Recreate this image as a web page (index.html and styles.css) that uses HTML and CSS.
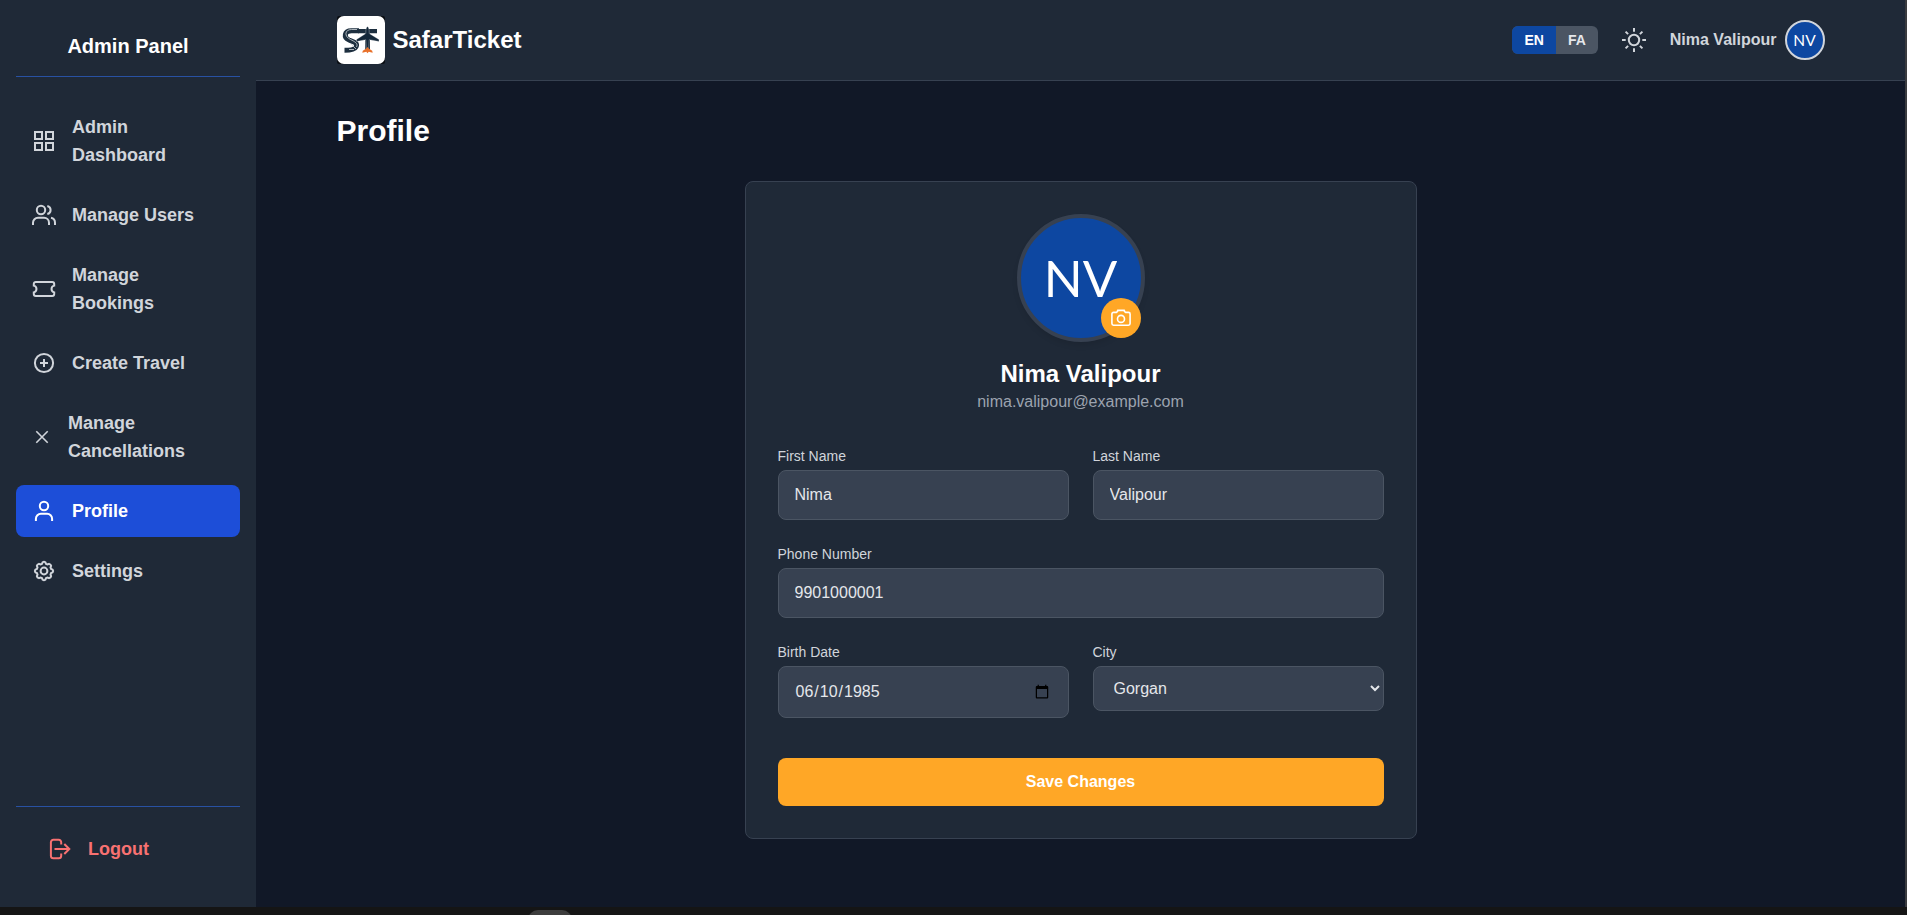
FILE: index.html
```html
<!DOCTYPE html>
<html lang="en">
<head>
<meta charset="utf-8">
<title>SafarTicket - Profile</title>
<link rel="stylesheet" href="styles.css">
</head>
<body>
<div class="app">
  <aside class="sidebar">
    <h2 class="sidebar-title">Admin Panel</h2>
    <nav class="nav">
      <a class="nav-item"><svg class="icon" viewBox="0 0 24 24"><path d="M3 3h7v7H3zM14 3h7v7h-7zM3 14h7v7H3zM14 14h7v7h-7z"/></svg><span>Admin Dashboard</span></a>
      <a class="nav-item"><svg class="icon" viewBox="0 0 24 24"><circle cx="9" cy="7" r="4.200"/><path d="M1 22v-2.200a5 5 0 0 1 5-5h6a5 5 0 0 1 5 5V22M15.300 2.900a4.200 4.200 0 0 1 0 8.200M19 14.800a5 5 0 0 1 4 4.900V22"/></svg><span>Manage Users</span></a>
      <a class="nav-item"><svg class="icon" viewBox="0 0 24 24"><path d="M3.800 4.900h16.400a2 2 0 0 1 2 2v1.700a3.500 3.500 0 0 0 0 6.800v1.700a2 2 0 0 1-2 2H3.800a2 2 0 0 1-2-2v-1.700a3.500 3.500 0 0 0 0-6.800V6.900a2 2 0 0 1 2-2z"/></svg><span>Manage Bookings</span></a>
      <a class="nav-item"><svg class="icon" viewBox="0 0 24 24"><circle cx="12" cy="12" r="9.100"/><path d="M12 8v8M8 12h8"/></svg><span>Create Travel</span></a>
      <a class="nav-item"><svg class="icon icon-small" viewBox="0 0 20 20"><path d="M4.300 4.300l11.400 11.400M15.700 4.300L4.300 15.700"/></svg><span>Manage Cancellations</span></a>
      <a class="nav-item active"><svg class="icon" viewBox="0 0 24 24"><circle cx="12" cy="7" r="4.200"/><path d="M3.900 22v-2.200a5 5 0 0 1 5-5h6.200a5 5 0 0 1 5 5V22"/></svg><span>Profile</span></a>
      <a class="nav-item"><svg class="icon" viewBox="0 0 24 24"><circle cx="12" cy="12" r="3.400"/><path d="M9.900 4.900 10.700 3.300Q12 2.400 13.300 3.300L14.100 4.900 15.500 5.500 17.200 4.900Q18.800 5.200 19.100 6.800L18.500 8.500 19.100 9.900 20.700 10.700Q21.600 12 20.700 13.300L19.100 14.100 18.500 15.500 19.100 17.200Q18.800 18.800 17.200 19.100L15.500 18.500 14.100 19.100 13.300 20.700Q12 21.600 10.700 20.700L9.900 19.100 8.500 18.500 6.800 19.100Q5.200 18.800 4.900 17.200L5.500 15.500 4.900 14.100 3.300 13.300Q2.400 12 3.300 10.700L4.900 9.900 5.500 8.500 4.900 6.800Q5.200 5.200 6.800 4.900L8.500 5.500z"/></svg><span>Settings</span></a>
    </nav>
    <div class="sidebar-footer">
      <a class="nav-item logout"><svg class="icon" viewBox="0 0 24 24"><path d="M13.200 7.500V5.200a2.500 2.500 0 0 0-2.500-2.500H5.400a2.500 2.500 0 0 0-2.500 2.500v13.600a2.500 2.500 0 0 0 2.500 2.500h5.300a2.500 2.500 0 0 0 2.500-2.500v-2.300M6.500 12h14.300M16.300 7l5 5-5 5"/></svg><span>Logout</span></a>
    </div>
  </aside>
  <div class="main">
    <header class="header">
      <div class="brand">
        <span class="logo"><svg viewBox="0 0 48 48">
          <path class="logo-road" d="M22 14.800h-7.500c-7.500 0-8 7-2.500 9.200 5.500 2 9 3 7 7-1.500 3-6 3.300-11.500 3.300"/>
          <path class="logo-lines" d="M20 13.500h-5.500c-7 0-7.500 7-1 10 4 2 8 4 6 7.500M14 28l5 5M12 33.500h5"/>
          <path class="logo-ink" d="M21 13h19v4.300H21zM28.200 17h4.800v18h-4.800z"/>
          <path class="logo-plane" d="M30.500 10.500c1.500 1.200 1.700 3 1.700 7l9.800 6v2l-9.800-1.800-.7 10.500h-2l-.7-10.500-9.300 1.800v-2l9.300-6c0-4 .2-5.800 1.700-7z"/>
          <path class="logo-tail" d="M30.500 31l1.200 1.500 3.500 2.200.5 2-4-1-1.200 1.500-1.200-1.500-4 1 .5-2 3.500-2.200z"/>
        </svg></span>
        <span class="brand-name">SafarTicket</span>
      </div>
      <div class="tools">
        <div class="lang"><span class="lang-option selected">EN</span><span class="lang-option">FA</span></div>
        <svg class="icon sun" viewBox="0 0 24 24"><circle cx="12" cy="12" r="5.200"/><path d="M12 0v3.700M12 20.300V24M0 12h3.700M20.300 12H24M3.600 3.600l2.500 2.500M17.900 17.900l2.500 2.500M3.600 20.400l2.500-2.500M17.900 6.100l2.500-2.500"/></svg>
        <div class="user"><span>Nima Valipour</span><span class="avatar avatar-small">NV</span></div>
      </div>
    </header>
    <main class="content">
      <h1 class="page-title">Profile</h1>
      <section class="card">
        <div class="identity">
          <div class="avatar-wrap">
            <span class="avatar avatar-large">NV</span>
            <button class="camera" type="button" aria-label="Change photo"><svg class="icon-camera" viewBox="0 0 20 20"><path d="M6.600 2.400h6.800v.9l1.200 1.100h2.900a1.600 1.600 0 0 1 1.600 1.600v9.600a1.600 1.600 0 0 1-1.600 1.600h-15A1.600 1.600 0 0 1 .9 15.600V6a1.600 1.600 0 0 1 1.600-1.600h2.900l1.200-1.100z"/><circle cx="10" cy="10.900" r="3.500"/></svg></button>
          </div>
          <h2 class="name">Nima Valipour</h2>
          <p class="email">nima.valipour@example.com</p>
        </div>
        <form class="form">
          <label class="field"><span class="label">First Name</span><input class="control" type="text" value="Nima"></label>
          <label class="field"><span class="label">Last Name</span><input class="control" type="text" value="Valipour"></label>
          <label class="field wide"><span class="label">Phone Number</span><input class="control" type="text" value="9901000001"></label>
          <label class="field"><span class="label">Birth Date</span><input class="control" type="date" value="1985-06-10"></label>
          <label class="field"><span class="label">City</span><select class="control"><option>Gorgan</option></select></label>
          <button class="save wide" type="button">Save Changes</button>
        </form>
      </section>
    </main>
  </div>
</div>
<div class="dock"><span class="dock-tab"></span></div>
</body>
</html>
```
FILE: styles.css
```css
* { box-sizing: border-box; margin: 0; padding: 0; }
body {
  height: 915px;
  overflow: hidden;
  background: #151515;
  color: #fff;
  font: 16px/24px "Liberation Sans", Arial, sans-serif;
}
.app {
  display: flex;
  height: 907px;
  background: #111827;
  border-right: 2px solid #3a3b3f;
}
.sidebar {
  width: 256px;
  flex: none;
  display: flex;
  flex-direction: column;
  padding: 16px;
  background: #1f2937;
}
.sidebar-title {
  margin-bottom: 24px;
  padding: 16px 0;
  border-bottom: 1px solid #2851a3;
  text-align: center;
  font-size: 20px;
  line-height: 28px;
}
.nav { flex: 1; display: flex; flex-direction: column; gap: 8px; }
.nav-item {
  display: flex;
  align-items: center;
  gap: 16px;
  padding: 12px 16px;
  border-radius: 8px;
  color: #d1d5db;
  font-size: 18px;
  font-weight: 600;
  line-height: 28px;
}
.nav-item.active { background: #1d4ed8; color: #fff; }
.icon {
  width: 24px;
  height: 24px;
  flex: none;
  fill: none;
  stroke: currentColor;
  stroke-width: 2;
}
.icon-small { width: 20px; height: 20px; stroke-width: 1.6; }
.sidebar-footer { padding: 16px; border-top: 1px solid #2851a3; }
.nav-item.logout { color: #f87171; }

.main { flex: 1; }
.header {
  display: flex;
  justify-content: space-between;
  align-items: center;
  height: 81px;
  padding: 0 80.5px;
  background: #1f2937;
  border-bottom: 1px solid #374151;
}
.brand { display: flex; align-items: center; gap: 8px; }
.logo { width: 48px; height: 48px; background: #0a0d12; border-radius: 2px; }
.logo svg { display: block; background: #fff; border-radius: 7px; }
.logo-road { fill: none; stroke: #1d2f3f; stroke-width: 5; }
.logo-lines { fill: none; stroke: #cfd5d9; stroke-width: .8; }
.logo-ink { fill: #1d2f3f; }
.logo-plane { fill: #14283a; stroke: #fff; stroke-width: .3; }
.logo-tail { fill: #e8712b; }
.brand-name { font-size: 24px; font-weight: 700; line-height: 32px; }
.tools { display: flex; align-items: center; gap: 24px; color: #d1d5db; }
.lang { display: flex; overflow: hidden; border-radius: 6px; background: #4b5563; }
.lang-option { padding: 4px 12px; color: #e5e7eb; font-size: 14px; font-weight: 600; line-height: 20px; }
.lang-option.selected { background: #0d47a1; color: #fff; }
.user { display: flex; align-items: center; gap: 8px; font-weight: 600; }
.avatar {
  display: flex;
  align-items: center;
  justify-content: center;
  border-radius: 50%;
  background: #0d47a1;
  color: #fff;
  font-family: Lato, sans-serif;
  font-weight: 400;
}
.avatar-small { width: 40px; height: 40px; border: 2px solid #d1d5db; font-size: 15.5px; }

.content { padding: 32px 80.5px 0; }
.page-title { font-size: 30px; line-height: 36px; }
.card {
  width: 672px;
  margin: 32px auto 0;
  padding: 32px;
  background: #1f2937;
  border: 1px solid #374151;
  border-radius: 8px;
}
.identity { display: flex; flex-direction: column; align-items: center; margin-bottom: 32px; }
.avatar-wrap { position: relative; margin-bottom: 16px; }
.avatar-large {
  width: 128px;
  height: 128px;
  border: 4px solid #374151;
  font-size: 51px;
  box-shadow: 0 4px 6px -1px rgba(0, 0, 0, .1);
}
.camera {
  position: absolute;
  right: 4px;
  bottom: 4px;
  display: grid;
  place-items: center;
  width: 40px;
  height: 40px;
  border: 0;
  border-radius: 50%;
  background: #ffa726;
}
.icon-camera { width: 20px; height: 20px; fill: none; stroke: #fff; stroke-width: 1.6; stroke-linejoin: round; }
.name { font-size: 24px; line-height: 32px; }
.email { color: #9ca3af; }
.form { display: grid; grid-template-columns: 1fr 1fr; gap: 24px; align-items: start; }
.field { display: flex; flex-direction: column; gap: 4px; }
.wide { grid-column: 1 / -1; }
.label { color: #d1d5db; font-size: 14px; line-height: 20px; }
.control {
  width: 100%;
  padding: 12px 16px;
  border: 1px solid #4b5563;
  border-radius: 8px;
  background-color: #374151;
  color: #e5e7eb;
  font: inherit;
}
.save {
  height: 48px;
  margin-top: 16px;
  border: 0;
  border-radius: 8px;
  background: #ffa726;
  color: #fff;
  font: inherit;
  font-weight: 600;
}
.dock { display: flex; height: 8px; padding: 3px 0 0 528px; }
.dock-tab { width: 44px; height: 10px; border-radius: 10px 10px 0 0; background: #3d3d3d; }
```
